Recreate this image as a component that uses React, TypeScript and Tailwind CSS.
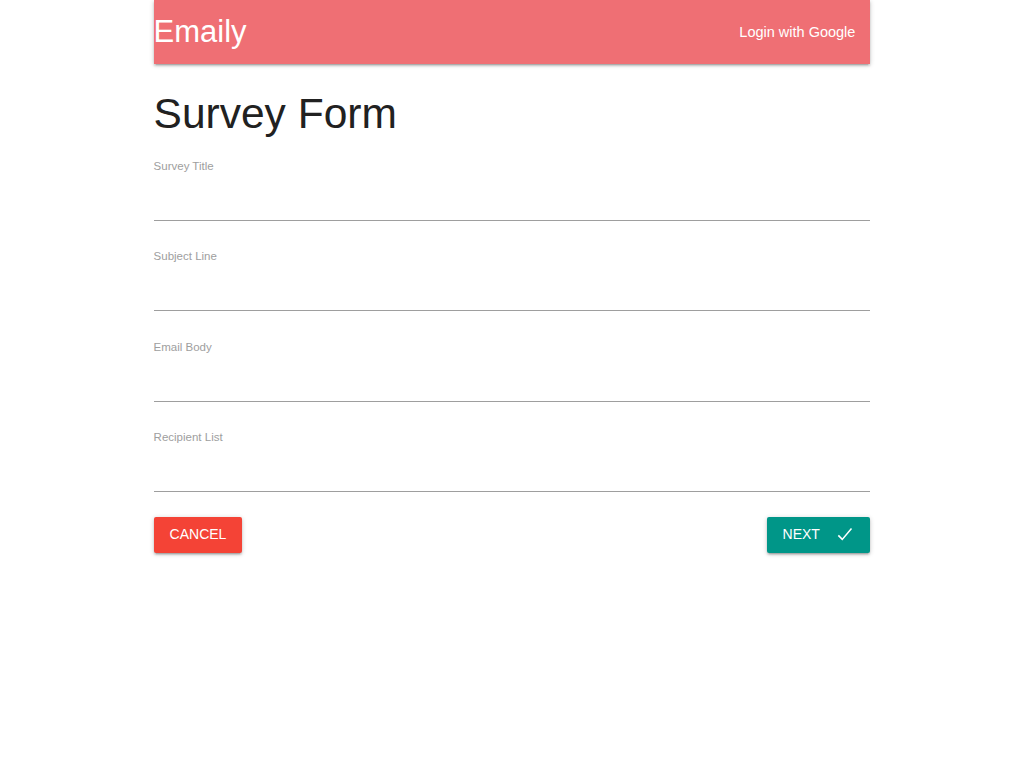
const fields = ["Survey Title", "Subject Line", "Email Body", "Recipient List"];

function SurveyField({ label }: { label: string }) {
  return (
    <div>
      <label className="block text-[11.5px] leading-[12px] text-[#9e9e9e]">{label}</label>
      <input
        type="text"
        className="block w-full h-[49px] border-b border-[#9e9e9e] bg-transparent outline-none text-[15px]"
      />
    </div>
  );
}

export default function App() {
  return (
    <div className="min-h-screen bg-white font-['Liberation_Sans',Arial,sans-serif]">
      <div className="w-[70%] mx-auto">
        <nav className="h-16 bg-[#ef6f74] text-white flex items-center justify-between shadow-[0_2px_2px_0_rgba(0,0,0,0.14),0_3px_1px_-2px_rgba(0,0,0,0.12),0_1px_5px_0_rgba(0,0,0,0.2)]">
          <a className="text-[31px] leading-[64px]">Emaily</a>
          <ul className="flex">
            <li>
              <a className="block px-[15px] text-[14.5px] leading-[64px]">Login with Google</a>
            </li>
          </ul>
        </nav>

        <h3 className="mt-[26px] mb-[23px] text-[42.5px] leading-[47px] text-[#212121]">Survey Form</h3>

        <form>
          <div className="flex flex-col gap-[29.33px]">
            {fields.map((f) => (
              <SurveyField key={f} label={f} />
            ))}
          </div>

          <div className="mt-[25px] flex justify-between">
            <button
              type="button"
              className="h-9 px-4 rounded-[2px] bg-[#f44336] text-white text-[14px] uppercase shadow-[0_2px_2px_0_rgba(0,0,0,0.14),0_3px_1px_-2px_rgba(0,0,0,0.12),0_1px_5px_0_rgba(0,0,0,0.2)]"
            >
              Cancel
            </button>
            <button
              type="submit"
              className="h-9 px-4 rounded-[2px] bg-[#009688] text-white text-[14px] uppercase flex items-center shadow-[0_2px_2px_0_rgba(0,0,0,0.14),0_3px_1px_-2px_rgba(0,0,0,0.12),0_1px_5px_0_rgba(0,0,0,0.2)]"
            >
              Next
              <svg viewBox="0 0 24 24" className="ml-[15px] w-[19.5px] h-[19.5px] fill-white">
                <path d="M9 16.2L4.8 12l-1.4 1.4L9 19 21 5l-1.4-1.4L9 16.2z" />
              </svg>
            </button>
          </div>
        </form>
      </div>
    </div>
  );
}
